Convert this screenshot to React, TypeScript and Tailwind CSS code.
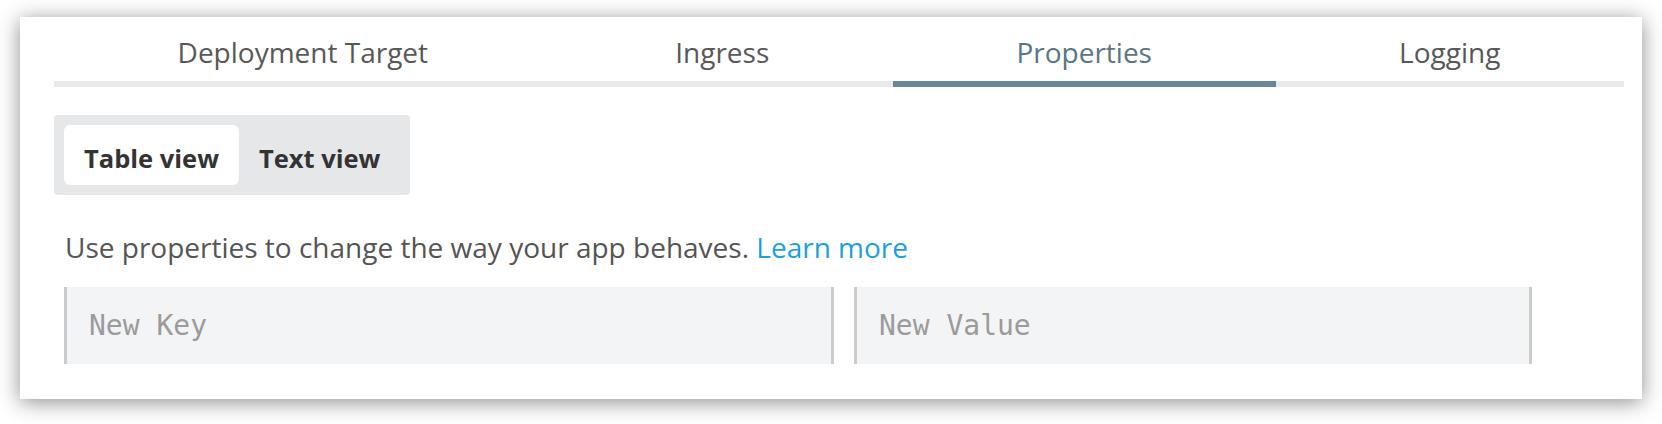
import clsx from "clsx";

const tabs = ["Deployment Target", "Ingress", "Properties", "Logging"];

const Tabs = ({ active }: { active: string }) => {
  return (
    <ul className="flex">
      {tabs.map((t) => (
        <li
          key={t}
          className={clsx(
            "flex-auto h-[70px] pt-[17px] text-center text-[28px] leading-[36px] border-b-[6px]",
            t === active
              ? "text-[#5a7584] border-[#6a8796]"
              : "text-[#585858] border-[#e8e9eb]"
          )}
        >
          {t}
        </li>
      ))}
    </ul>
  );
};

const ViewToggle = () => {
  return (
    <div className="mt-[28px] inline-flex p-[10px] bg-[#e6e7e9] rounded-[4px]">
      <button className="h-[60px] px-[20px] pt-[6px] rounded-[6px] bg-white text-[25.5px] font-bold text-[#333]">
        Table view
      </button>
      <button className="h-[60px] px-[20px] pt-[6px] rounded-[6px] text-[25.5px] font-bold text-[#333]">
        Text view
      </button>
    </div>
  );
};

export default function App() {
  return (
    <div className="w-[1662px] h-[424px] bg-white pt-[17px] pl-[20px] font-['Open_Sans',sans-serif]">
      <div className="w-[1622px] h-[382px] bg-white pl-[34px] pr-[18px] shadow-[0_3px_20px_rgba(0,0,0,0.45)]">
        <Tabs active="Properties" />
        <div>
          <ViewToggle />
        </div>
        <p className="mt-[32px] pl-[11px] text-[28px] leading-[40px] text-[#555]">
          Use properties to change the way your app behaves.{" "}
          <a className="text-[#1a9fe0]">Learn more</a>
        </p>
        <div className="mt-[20px] pl-[10px] flex gap-[20px]">
          <input
            placeholder="New Key"
            className="w-[770px] h-[77px] bg-[#f3f4f6] border-x-[3px] border-[#cbcbcb] pl-[22px] outline-none font-['DejaVu_Sans_Mono',monospace] text-[28px] placeholder:text-[#9b9b9b]"
          />
          <input
            placeholder="New Value"
            className="w-[678px] h-[77px] bg-[#f3f4f6] border-x-[3px] border-[#cbcbcb] pl-[22px] outline-none font-['DejaVu_Sans_Mono',monospace] text-[28px] placeholder:text-[#9b9b9b]"
          />
        </div>
      </div>
    </div>
  );
}
